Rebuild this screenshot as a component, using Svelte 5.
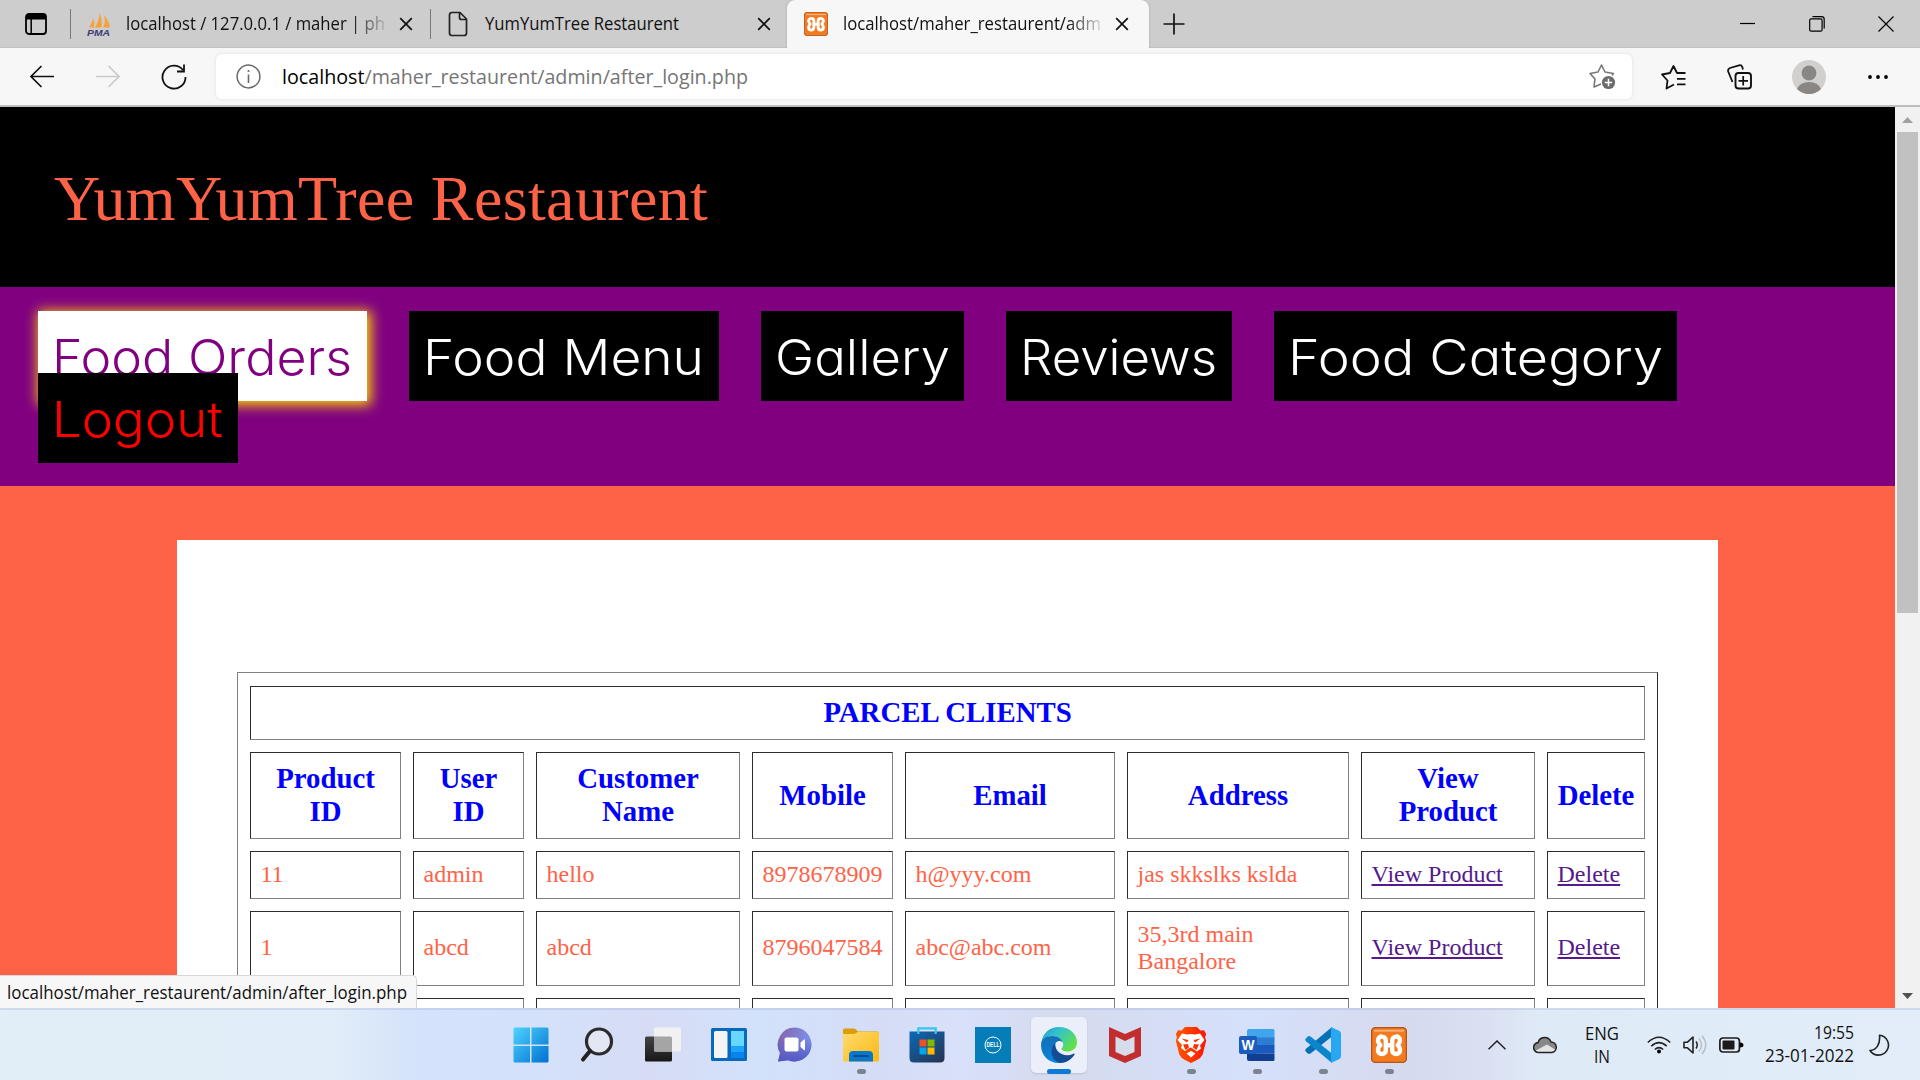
<script>
  const nav = [
    { text: 'Food Orders', w: 329, t: 300, cls: 'active' },
    { text: 'Food Menu', w: 310, t: 281, cls: '' },
    { text: 'Gallery', w: 203, t: 175, cls: '' },
    { text: 'Reviews', w: 226, t: 197, cls: '' },
    { text: 'Food Category', w: 403, t: 375, cls: '' }
  ];
  const columns = ['Product ID', 'User ID', 'Customer Name', 'Mobile', 'Email', 'Address', 'View Product', 'Delete'];
  const widths = [151, 111, 204, 141, 210, 222, 174, 98];
  const rows = [
    ['11', 'admin', 'hello', '8978678909', 'h@yyy.com', 'jas skkslks kslda'],
    ['1', 'abcd', 'abcd', '8796047584', 'abc@abc.com', '35,3rd main Bangalore']
  ];
</script>

{#snippet label(text, width, size, base, cls)}
  <svg class="label {cls}" {width} height="24"><text x="0" y={base} font-size={size} textLength={width} lengthAdjust="spacingAndGlyphs">{text}</text></svg>
{/snippet}

{#snippet cross()}
  <svg class="cross" width="14" height="14" viewBox="0 0 14 14"><path d="M1.2 1.2 12.8 12.8M12.8 1.2 1.2 12.8" fill="none" stroke="#111" stroke-width="1.7" /></svg>
{/snippet}

{#snippet xampp(size)}
  <svg width={size} height={size} viewBox="0 0 36 36">
    <rect x=".6" y=".6" width="34.8" height="34.8" rx="4" fill="#f47a20" stroke="#b4541a" stroke-width="1.4" />
    <path d="M3 2.800h30v1.800H3z" fill="#f9b27c" />
    <path d="M14.800 18.300V13.500C14.800 8.300 7 8.300 7 13.300 7 16 8.700 17 9.300 18.300 7.700 19.500 7 21 7 23.300c0 5 7.800 5 7.800 0v-5h6.400v-4.800c0-5.200 7.800-5.200 7.800-.2 0 2.700-1.700 3.700-2.300 5 1.600 1.200 2.300 2.700 2.300 5 0 5-7.800 5-7.800 0v-5" fill="none" stroke="#fff" stroke-width="4.400" stroke-linejoin="round" />
  </svg>
{/snippet}

<div class="screen">
  <div class="tabbar">
    <div class="actions">
      <svg width="22" height="22" viewBox="0 0 22 22"><rect x="1" y="1" width="20" height="20" rx="3" fill="none" stroke="#000" stroke-width="1.8" /><path d="M1 3q0-2 2-2h16q2 0 2 2v3.500H1z" /><path d="M6.200 6v15" stroke="#000" stroke-width="1.500" /></svg>
    </div>
    <div class="tab first">
      <svg class="pma" width="24" height="24" viewBox="0 0 24 24">
        <path d="M2 15.500Q5 11 6.500 6 8 11 7 15.500zM8 15.500Q12 9 12.500 1q3 7 2 14.500zM16 15.500q3-5 1-12 5 5 6 12z" fill="#f7a13b" />
        <text x="0" y="23.500" textLength="23" lengthAdjust="spacingAndGlyphs">PMA</text>
      </svg>
      {@render label('localhost / 127.0.0.1 / maher | ph', 259, 18, 18, 'fade')}
      {@render cross()}
    </div>
    <div class="tab second">
      <svg class="page-icon" width="20" height="26" viewBox="0 0 20 26"><path d="M4 1.500h8l6.500 6.500v14q0 2.500-2.500 2.500H4Q1.500 24.500 1.500 22V4Q1.500 1.500 4 1.500zM11.500 2v4.500q0 2 2 2H18" fill="none" stroke="#222" stroke-width="1.700" /></svg>
      {@render label('YumYumTree Restaurent', 194, 18, 18, '')}
      {@render cross()}
    </div>
    <div class="tab current">
      {@render xampp(24)}
      {@render label('localhost/maher_restaurent/adm', 258, 18, 18, 'fade')}
      {@render cross()}
    </div>
    <svg class="plus" width="22" height="22" viewBox="0 0 22 22"><path d="M11 .5v21M.5 11h21" stroke="#111" stroke-width="1.700" /></svg>
    <div class="window">
      <svg width="16" height="16" viewBox="0 0 16 16"><path d="M0 7.500h15" stroke="#000" stroke-width="1.200" /></svg>
      <svg width="16" height="16" viewBox="0 0 16 16"><rect x=".7" y="2.800" width="12.400" height="12.400" rx="1.500" fill="none" stroke="#000" stroke-width="1.200" /><path d="M3.500.7h9q2.700 0 2.700 2.700v9" fill="none" stroke="#000" stroke-width="1.200" /></svg>
      <svg width="16" height="16" viewBox="0 0 16 16"><path d="M.5.500l15 15m0-15-15 15" stroke="#000" stroke-width="1.200" /></svg>
    </div>
  </div>

  <div class="toolbar">
    <svg class="back" width="24" height="24" viewBox="0 0 24 24"><path d="M24 11.500H1M11.500 1 1 11.500 11.500 22" fill="none" stroke="#111" stroke-width="1.700" /></svg>
    <svg class="forward" width="24" height="24" viewBox="0 0 24 24"><path d="M0 11.500h23M12.500 1 23 11.500 12.500 22" fill="none" stroke="#c9c9c9" stroke-width="1.700" /></svg>
    <svg class="reload" width="26" height="26" viewBox="0 0 26 26"><path d="M24.500 13A11.500 11.500 0 1 1 22 6M23 .5v7h-7" fill="none" stroke="#111" stroke-width="1.800" /></svg>
    <div class="address">
      <svg width="25" height="25" viewBox="0 0 25 25"><circle cx="12.500" cy="12.500" r="11.400" fill="none" stroke="#6a6a6a" stroke-width="1.500" /><path d="M12.500 10.500v8.500" stroke="#6a6a6a" stroke-width="1.600" /><circle cx="12.500" cy="7" r="1.100" fill="#6a6a6a" /></svg>
      <svg class="label url" width="466" height="24"><text x="0" y="18.500" font-size="20.5" textLength="466" lengthAdjust="spacingAndGlyphs"><tspan class="host">localhost</tspan>/maher_restaurent/admin/after_login.php</text></svg>
      <svg class="star" width="27" height="27" viewBox="0 0 27 27"><path d="M12 21 5 24l1-8-5-5.500 8-1.500L12.500 2 16 9l8.500 1.500-1.500 2" fill="none" stroke="#777" stroke-width="1.600" stroke-linejoin="round" /><circle cx="19.500" cy="19.500" r="6.600" fill="#6b6b6b" /><path d="M19.500 15.800v7.400M15.800 19.500h7.400" stroke="#fff" stroke-width="1.500" /></svg>
    </div>
    <svg class="favs" width="25" height="26" viewBox="0 0 25 26"><path d="M13 20.500 5.500 24.500l1-8L1 10.500l8-1.500L12.500 2 16 9h8.500M16 14.800h8.500M16 20.300h8.500" fill="none" stroke="#111" stroke-width="1.800" stroke-linejoin="round" /></svg>
    <svg class="collections" width="25" height="26" viewBox="0 0 25 26"><path d="M5.500 18 1.200 7.500Q.5 5 3 4L12 1.300q2.500-.6 3.300 1.700l.7 2.500" fill="none" stroke="#111" stroke-width="1.800" /><rect x="8.500" y="9" width="15.500" height="15.500" rx="3" fill="none" stroke="#111" stroke-width="1.900" /><path d="M16.200 12v9.500M11.500 16.800h9.500" stroke="#111" stroke-width="1.700" /></svg>
    <svg class="avatar" width="34" height="34" viewBox="0 0 34 34"><circle cx="17" cy="17" r="17" fill="#d2d0ce" /><circle cx="17" cy="13" r="7.400" fill="#8a8683" /><path d="M5 29q3-7 12-7t12 7q-5 5-12 5T5 29z" fill="#8a8683" /></svg>
    <svg class="more" width="22" height="6" viewBox="0 0 22 6"><circle cx="3" cy="3" r="1.900" /><circle cx="11" cy="3" r="1.900" /><circle cx="19" cy="3" r="1.900" /></svg>
  </div>

  <div class="viewport">
    <main>
      <header><h1>YumYumTree Restaurent</h1></header>
      <nav>
        <div class="links">
          {#each nav as n}
            <a class="link {n.cls}" style:width="{n.w}px"><svg width={n.t} height="90"><text x="0" y="63.5" textLength={n.t} lengthAdjust="spacingAndGlyphs">{n.text}</text></svg></a>
          {/each}
        </div>
        <a class="link logout"><svg width="171" height="90"><text x="0" y="63.5" textLength="171" lengthAdjust="spacingAndGlyphs">Logout</text></svg></a>
      </nav>
      <section>
        <div class="panel">
          <table>
            <colgroup>{#each widths as w}<col style:width="{w}px" />{/each}</colgroup>
            <tbody>
              <tr class="caption"><th colspan="8">PARCEL CLIENTS</th></tr>
              <tr class="heads">{#each columns as c}<th>{c}</th>{/each}</tr>
              {#each rows as row, i}
                <tr class={i ? 'tall' : 'short'}>
                  {#each row as cell}<td>{cell}</td>{/each}
                  <td><span class="visited">View Product</span></td>
                  <td><span class="visited">Delete</span></td>
                </tr>
              {/each}
              <tr class="short">{#each columns as _}<td></td>{/each}</tr>
            </tbody>
          </table>
        </div>
      </section>
    </main>
    <div class="scrollbar">
      <svg width="11" height="6" viewBox="0 0 11 6"><path d="M0 6 5.500 0 11 6z" fill="#a0a0a0" /></svg>
      <div class="thumb"></div>
      <svg class="down" width="11" height="6" viewBox="0 0 11 6"><path d="M0 0h11L5.500 6z" fill="#505050" /></svg>
    </div>
    <div class="status">{@render label('localhost/maher_restaurent/admin/after_login.php', 400, 17.7, 19, '')}</div>
  </div>

  <footer>
    <div class="apps">
      <div class="app"><svg viewBox="0 0 36 36"><defs><linearGradient id="win" x2="1" y2="1"><stop stop-color="#4fd3ff" /><stop offset="1" stop-color="#0070d0" /></linearGradient></defs><path d="M2 .5h15v17H.5V2Q.5.500 2 .5zM18.500.500H34q1.500 0 1.500 1.500v15.500h-17zM.5 19H17v16.500H2q-1.500 0-1.500-1.500zM18.500 19h17v15q0 1.500-1.500 1.500H18.500z" fill="url(#win)" /></svg></div>
      <div class="app"><svg viewBox="0 0 36 36"><circle cx="20" cy="14.500" r="12.500" fill="#e3e7f4" stroke="#2b2b2b" stroke-width="3.200" /><path d="M11 24 4 32.500" stroke="#222" stroke-width="4" stroke-linecap="round" /></svg></div>
      <div class="app"><svg viewBox="0 0 36 36"><defs><linearGradient id="tv" y2="1" x2="0"><stop stop-color="#444" /><stop offset="1" stop-color="#171717" /></linearGradient></defs><rect x="0" y="9.500" width="27" height="25" rx="1.500" fill="url(#tv)" /><rect x="9" y=".5" width="27" height="24" rx="1.500" fill="#f1f1f1" /><path d="M9 9.500h16.500q1.500 0 1.500 1.500v13.500H10.500Q9 24.500 9 23z" fill="#a5a5a5" /></svg></div>
      <div class="app"><svg viewBox="0 0 36 36"><rect y="1" width="36" height="33" rx="1.500" fill="#0868bd" /><rect x="3" y="4" width="13.500" height="27" rx="1.500" fill="#f4f4f4" /><path d="M20 4h13v15H20z" fill="#66d7ff" /><path d="M20 19h13v6H20z" fill="#1ba3ff" /><path d="M20 25h13v6H20z" fill="#0a84ec" /></svg></div>
      <div class="app"><svg viewBox="0 0 36 36"><defs><linearGradient id="chat" x2="1" y2=".3"><stop stop-color="#8661a8" /><stop offset="1" stop-color="#7b93eb" /></linearGradient><linearGradient id="chat2" x2="0" y2="1"><stop offset=".3" stop-color="#4b53bc" stop-opacity="0" /><stop offset="1" stop-color="#5358c8" /></linearGradient></defs><g id="bubble"><path d="M18 .5A17 17 0 1 1 11 33.200L1 34.500l2-8.500A17 17 0 0 1 18 .5z" fill="url(#chat)" /><path d="M18 .5A17 17 0 1 1 11 33.200L1 34.500l2-8.500A17 17 0 0 1 18 .5z" fill="url(#chat2)" /></g><rect x="7.500" y="10.500" width="14" height="14" rx="2" fill="#fff" /><path d="M23.500 15.500 27 12.500q1-.5 1 .5v9.500q0 1-1 .5l-3.500-3z" fill="#fff" /></svg></div>
      <div class="app open"><svg viewBox="0 0 36 36"><defs><linearGradient id="fold" x2="1" y2="1"><stop stop-color="#ffdc70" /><stop offset="1" stop-color="#fbb80f" /></linearGradient></defs><path d="M0 3q0-1.500 1.500-1.500h9.500q1.500 0 4 3h19.500q1.500 0 1.500 1.500v6H0z" fill="#dc9d09" /><path d="M0 7h11l4-2h20q1 0 1 1v27q0 1.500-1 1.500H1.500Q0 34.500 0 33z" fill="url(#fold)" /><path d="M6 34.500V28q0-4 4-4h16q4 0 4 4v6.500z" fill="#0a78c9" /><path d="M11 29h14" stroke="#064b93" stroke-width="2" stroke-linecap="round" /></svg></div>
      <div class="app"><svg viewBox="0 0 36 36"><defs><linearGradient id="store" x2=".8" y2="1"><stop stop-color="#0b69b8" /><stop offset="1" stop-color="#253858" /></linearGradient></defs><path d="M.5 4.500h35v26.500q0 4.500-4.500 4.500H5Q.5 35.500.5 31z" fill="url(#store)" /><path d="M9.300 7V1.300h17.400V7" fill="none" stroke="#35c5f0" stroke-width="2.200" /><path d="M10.500 12.500h7v7h-7z" fill="#f25022" /><path d="M18.500 12.500h7v7h-7z" fill="#7fba00" /><path d="M10.500 20.500h7v7h-7z" fill="#00a4ef" /><path d="M18.500 20.500h7v7h-7z" fill="#ffb900" /></svg></div>
      <div class="app"><svg class="dell" viewBox="0 0 36 36"><path d="M0 0h36v36H0z" fill="#057db8" /><circle cx="18" cy="18" r="8" fill="none" stroke="#fff" stroke-width="1" /><text x="11.500" y="20.300" textLength="13" lengthAdjust="spacingAndGlyphs">DELL</text></svg></div>
      <div class="app focused"><svg viewBox="0 0 36 36"><defs><linearGradient id="e1" x2="1" y2=".6"><stop stop-color="#2398d8" /><stop offset=".45" stop-color="#32c4c9" /><stop offset="1" stop-color="#63e04a" /></linearGradient><linearGradient id="e2" x2="0" y2="1"><stop stop-color="#136fb5" /><stop offset="1" stop-color="#0a84e0" /></linearGradient></defs><path d="M.3 15.500C2 5.500 9 0 18 0c11 0 18 7.500 18 15 0 6-4 9.500-9 9.500-4 0-6.500-1.500-6.500-2.600 0-1 1.700-1.500 1.700-4.700C22.200 13 18 9 11.500 9 6 9 2 12 .3 15.500z" fill="url(#e1)" /><path d="M0 18C0 12 5 9 11.500 9c6 0 10 3.500 10.500 7-2-3-7-2.500-8.500 2-1.500 7 2.500 15 10 16.500-2 1-3.500 1.500-5.500 1.500C7 36 0 28 0 18z" fill="url(#e2)" /><path d="M14.500 16C9 20 8.500 32 18 35.700c7 .8 12-3 15.500-8 .6-1-.3-1.400-1.200-1C22 31.500 13 24 14.500 16z" fill="#124c93" /></svg></div>
      <div class="app"><svg viewBox="0 0 36 36"><path d="M2 0l16 7L34 0v29l-16 7L2 29z" fill="#c12e2d" /><path d="M8.500 9.500v15.500l9.500 4 9.500-4V9.500L18 14z" fill="#d7dcec" /></svg></div>
      <div class="app open"><svg viewBox="0 0 36 36"><defs><linearGradient id="brave" x2="1" y2="0"><stop stop-color="#ff5500" /><stop offset=".5" stop-color="#ff3a00" /><stop offset="1" stop-color="#f91504" /></linearGradient></defs><path d="M12 0h12l3.500 3.500 3.500-.3 2.200 4-1.200 3 1.200 3.300-3.500 14Q28 31 24 33l-6 3-6-3q-4-2-5.700-5.500l-3.500-14L4 10.200l-1.200-3 2.200-4 3.500.3z" fill="url(#brave)" /><path d="M9 6.500l5 1 4-.5 4 .5 5-1 4.500 6.500-4.500 5.500 1 3-4 3-3.500-2.500L18 20.500 15.500 21.500 12 24l-4-3 1-3L4.500 13z" fill="#fff" /><path d="M8.500 11.500l7 1.500-1.500 2.500zM27.500 11.500l-7 1.500 1.500 2.500zM10 17.500l5-.5 1 3.500-3.500 2.500zM26 17.500l-5-.5-1 3.500 3.500 2.500z" fill="#fb3303" /><path d="M13.500 26.500l4.500-2.500 4.500 2.500-4.500 4z" fill="#fff" /></svg></div>
      <div class="app open"><svg class="word" viewBox="0 0 36 36"><path d="M8 4q0-2 2-2h24q1.500 0 1.500 1.500V11H8z" fill="#41a5ee" /><path d="M8 10.500h27.500V18H8z" fill="#2b7cd3" /><path d="M8 18h27.500v8.500H8z" fill="#185abd" /><path d="M8 26.500h27.500v6q0 1.500-1.500 1.500H10q-2 0-2-2z" fill="#103f91" /><rect y="9" width="18" height="18" rx="2" fill="#1b5cbe" /><text x="2.500" y="22.500" textLength="13" lengthAdjust="spacingAndGlyphs">W</text></svg></div>
      <div class="app open"><svg viewBox="0 0 36 36"><path d="M27 0v9.500L5.500 26.500q-1.500 1-3-.3L.8 24.500q-1.200-1.500.2-2.800z" fill="#0571b4" /><path d="M27 36v-9.500L5.500 9.500q-1.500-1-3 .3L.8 11.500q-1.200 1.500.2 2.800z" fill="#0b86cb" /><path d="M26 0l8.500 4Q36 5 36 7v22q0 2-1.500 3L26 36z" fill="#28a8f2" /></svg></div>
      <div class="app open">{@render xampp(36)}</div>
    </div>

    <div class="tray">
      <svg class="chev" width="18" height="10" viewBox="0 0 18 10"><path d="M.5 9.300 9 1l8.500 8.300" fill="none" stroke="#222" stroke-width="1.500" /></svg>
      <svg class="cloud" width="25" height="18" viewBox="0 0 25 18"><path d="M6 16.500a5 5 0 0 1-.8-10C6.500.500 15.500-.5 18 6a5.300 5.300 0 0 1 1 10.500z" fill="#888" /><path d="M2 15 14 8.500l9.500 6q-1.500 2-4 2H6q-2.500 0-4-1.500z" fill="#e4e4e4" /><path d="M6 16.500a5 5 0 0 1-.8-10C6.500.500 15.500-.5 18 6a5.300 5.300 0 0 1 1 10.500z" fill="none" stroke="#222" stroke-width="1.500" /></svg>
      <div class="lang">{@render label('ENG', 34, 18, 19, '')}{@render label('IN', 16, 18, 18, '')}</div>
      <svg class="wifi" width="24" height="18" viewBox="0 0 24 18"><path d="M.8 6.500Q12-4 23.200 6.500M4.300 10.200q7.700-7 15.400 0M7.800 13.500q4.200-3.700 8.400 0" fill="none" stroke="#222" stroke-width="1.600" /><circle cx="12" cy="15.600" r="2" /></svg>
      <svg class="vol" width="25" height="20" viewBox="0 0 25 20"><path d="M1 7.200h3.500L10 2v16l-5.500-5.200H1z" fill="none" stroke="#222" stroke-width="1.600" stroke-linejoin="round" /><path d="M13 6.500q2.500 3.500 0 7" fill="none" stroke="#222" stroke-width="1.500" /><path d="M16 3.500q5 6.500 0 13M19 .8q7.500 9.200 0 18.400" fill="none" stroke="#b6bec8" stroke-width="1.400" /></svg>
      <svg class="bat" width="25" height="16" viewBox="0 0 25 16"><rect x=".9" y="1" width="19.500" height="14" rx="3" fill="none" stroke="#1b1b1b" stroke-width="1.700" /><rect x="3.500" y="3.600" width="12" height="8.800" rx=".8" fill="#1b1b1b" /><path d="M21 5.500q3.500 0 3.500 2.500T21 10.500z" /></svg>
      <div class="clock">{@render label('19:55', 40, 18, 18, '')}{@render label('23-01-2022', 89, 18, 17, '')}</div>
      <svg class="moon" width="21" height="22" viewBox="0 0 21 22"><path d="M10.500 1.200A10 10 0 1 1 1 16.500C7 16 11.500 11 10.500 1.200z" fill="none" stroke="#222" stroke-width="1.600" stroke-linejoin="round" /></svg>
    </div>
  </footer>
</div>

<style>
  :global(body) { margin: 0; overflow: hidden; }
  .screen { width: 1920px; height: 1080px; display: flex; flex-direction: column; overflow: hidden; background: #fff; font-family: "Liberation Serif", serif; }
  svg { display: block; flex: none; }
  .label { font-family: "Open Sans", "Noto Sans", sans-serif; overflow: visible; fill: #111; }
  .fade { mask-image: linear-gradient(90deg, #000 0 calc(100% - 34px), transparent calc(100% + 6px)); }

  .tabbar { height: 48px; flex: none; display: flex; align-items: center; background: #cdcdcd; box-shadow: inset 0 -1px #c2c2c2; }
  .actions { width: 71px; height: 30px; display: flex; align-items: center; padding-left: 25px; box-sizing: border-box; border-right: 1px solid #777; }
  .tab { display: flex; align-items: center; box-sizing: border-box; }
  .tab.first { width: 360px; height: 30px; padding-left: 16px; gap: 15px; border-right: 1px solid #777; }
  .tab.first .cross { margin-left: -1px; }
  .pma text { font: italic 800 9.500px "Liberation Sans", sans-serif; fill: #3c3c74; }
  .tab.second { width: 356px; padding-left: 17px; gap: 17px; }
  .tab.second .cross { margin-left: 61px; }
  .tab.current { width: 362px; height: 48px; padding-left: 17px; gap: 15px; background: #f7f7f7; border-radius: 8px 8px 0 0; box-shadow: 0 0 2px #999; clip-path: inset(0 -3px 0 -3px); }
  .tab.current .cross { margin-left: -1px; }
  .plus { margin-left: 14px; }
  .window { margin-left: auto; display: flex; gap: 53px; padding-right: 26px; }

  .toolbar { height: 59px; flex: none; box-sizing: border-box; display: flex; align-items: center; background: #f7f7f7; border-bottom: 2px solid #bdbdbd; padding-left: 30px; }
  .forward { margin-left: 42px; }
  .reload { margin-left: 41px; }
  .address { width: 1416px; height: 45px; margin-left: 29px; display: flex; align-items: center; background: #fff; border-radius: 6px; box-shadow: 0 0 4px #e2e2e2; box-sizing: border-box; padding: 0 16px 0 20px; }
  .url { margin-left: 21px; fill: #757575; }
  .host { fill: #000; }
  .star { margin-left: auto; }
  .favs { margin-left: 29px; }
  .collections { margin-left: 41px; }
  .avatar { margin-left: 40px; }
  .more { margin-left: 41px; }

  .viewport { position: relative; height: 901px; flex: none; display: flex; overflow: hidden; }
  main { width: 1895px; height: 901px; overflow: hidden; }
  header { height: 180px; background: #000; display: flex; align-items: center; padding-left: 54px; }
  h1 { margin: 4px 0 0; font-size: 64px; font-weight: 400; color: tomato; line-height: 74px; letter-spacing: .37px; }
  nav { height: 199px; box-sizing: border-box; background: purple; padding: 24px 0 0 38px; }
  .links { display: flex; gap: 42px; height: 62px; }
  .link { height: 90px; background: #000; fill: #fff; box-sizing: border-box; padding-left: 14px; font: 300 49px "Inter", "Lato", sans-serif; font-feature-settings: "cv11", "ss03"; flex: none; }
  .link.active { background: #fff; fill: purple; box-shadow: 2px 2px 12px 2px gold; }
  .link.logout { display: block; position: relative; width: 200px; fill: red; }
  section { height: 522px; box-sizing: border-box; background: tomato; padding: 54px 0 0 177px; }
  .panel { width: 1541px; height: 600px; background: #fff; box-sizing: border-box; padding: 132px 0 0 60px; }
  table { width: 1421px; table-layout: fixed; border-collapse: separate; border-spacing: 12px; border: 1px solid; border-color: #808080 #2c2c2c #2c2c2c #808080; padding-top: 1px; }
  th, td { border: 1px solid; border-color: #2c2c2c #808080 #808080 #2c2c2c; padding: 0 9.500px 2px; box-sizing: border-box; vertical-align: middle; }
  th { color: #00f; font-size: 28.800px; line-height: 33px; padding: 0 8px 1px; }
  td { color: tomato; font-size: 24px; line-height: 27px; }
  .caption { height: 54px; }
  .heads { height: 87px; }
  .short { height: 48px; }
  .tall { height: 75px; }
  .visited { color: #551a8b; text-decoration: underline; }
  .scrollbar { width: 25px; display: flex; flex-direction: column; align-items: center; background: #f1f1f1; box-sizing: border-box; padding: 10px 0 9px; }
  .thumb { width: 21px; height: 481px; margin-top: 9px; background: #c1c1c1; }
  .down { margin-top: auto; }
  .status { position: absolute; left: 0; bottom: 0; width: 417px; height: 33px; box-sizing: border-box; padding: 4px 0 0 7px; background: #f7f7f7; border: solid #d8d8d8; border-width: 1px 1px 0 0; border-radius: 0 5px 0 0; }

  footer { height: 72px; flex: none; display: flex; align-items: center; padding-left: 498px; box-sizing: border-box; border-top: 2px solid rgba(150, 165, 200, .25); background: linear-gradient(90deg, #e1eef7 0, #e1edf8 330px, #d4e2fb 420px, #d3e2fa 530px, #d7dcf5 650px, #d2e2fa 760px, #d5dcf6 880px, #d8e0fa 960px, #d5dbee 1060px, #d5e0fa 1250px, #d6daee 1410px, #dadff2 1480px, #dfeaf7 1540px, #e2edf9 1920px); }
  .apps { display: flex; }
  .app { position: relative; width: 66px; height: 70px; display: flex; align-items: center; justify-content: center; }
  .app svg { position: relative; width: 36px; height: 36px; }
  .app.open::after, .app.focused::after { content: ""; position: absolute; bottom: 6px; left: 28.500px; width: 9px; height: 5px; border-radius: 3px; background: #7c8290; }
  .app.focused::before { content: ""; position: absolute; left: 5px; top: 7px; width: 56px; height: 56px; border-radius: 5px; background: #ebeff9; box-shadow: 0 1px 2px #b9bfd0; }
  .app.focused::after { left: 21px; width: 24px; background: #0a7ad6; }
  .dell text { font: 700 6.500px "Liberation Sans", sans-serif; fill: #fff; }
  .word text { font: 700 14px "Liberation Sans", sans-serif; fill: #fff; }
  .tray { display: flex; align-items: center; margin-left: 66px; }
  .cloud { margin-left: 27px; }
  .lang { display: flex; flex-direction: column; align-items: center; margin-left: 27px; }
  .wifi { margin-left: 28px; }
  .vol { margin-left: 12px; }
  .bat { margin-left: 11px; }
  .clock { display: flex; flex-direction: column; align-items: flex-end; margin-left: 21px; }
  .moon { margin-left: 15px; }
</style>
